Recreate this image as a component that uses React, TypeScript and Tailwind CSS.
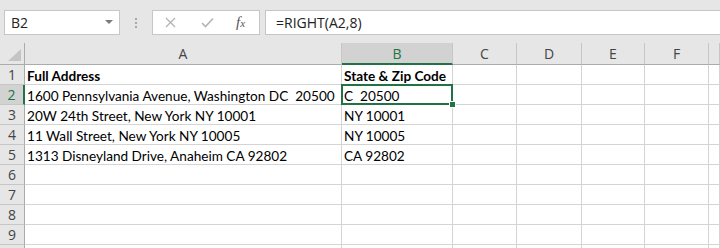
import React from "react";

const cols = [25, 317, 111, 64, 65, 63, 64, 11];
const letters = ["A", "B", "C", "D", "E", "F", ""];
const data: [string, string][] = [
  ["Full Address", "State & Zip Code"],
  ["1600 Pennsylvania Avenue, Washington DC  20500", "C  20500"],
  ["20W 24th Street, New York NY 10001", "NY 10001"],
  ["11 Wall Street, New York NY 10005", "NY 10005"],
  ["1313 Disneyland Drive, Anaheim CA 92802", "CA 92802"],
  ["", ""],
  ["", ""],
  ["", ""],
  ["", ""],
  ["", ""],
];

const ui = { fontFamily: '"Open Sans", "Noto Sans", sans-serif' };
const cell = { fontFamily: 'Lato, "Liberation Sans", sans-serif' };

export default function App() {
  return (
    <div className="w-[720px] h-[248px] overflow-hidden bg-white">
      {/* formula bar */}
      <div className="h-[43px] bg-[#e6e6e6] flex items-start pt-[10px] pl-[4px]" style={ui}>
        <div className="w-[116px] h-[25px] border border-[#c6c6c6] bg-white flex items-center pl-[6px] pr-[6px] justify-between">
          <span className="text-[14px] text-[#222]">B2</span>
          <svg width="8" height="5" viewBox="0 0 8 5"><path d="M0 0 L8 0 L4 4 Z" fill="#7a7a7a" /></svg>
        </div>
        <div className="w-[32px] h-[25px] flex flex-col items-center justify-center gap-[2px]">
          <span className="w-[2px] h-[2px] bg-[#a8a8a8]" />
          <span className="w-[2px] h-[2px] bg-[#a8a8a8]" />
          <span className="w-[2px] h-[2px] bg-[#a8a8a8]" />
        </div>
        <div className="w-[108px] h-[25px] border border-[#c6c6c6] bg-white flex items-center">
          <svg className="ml-[12px]" width="11" height="11" viewBox="0 0 11 11">
            <path d="M1 1 L10 10 M10 1 L1 10" stroke="#b4b4b4" strokeWidth="1.3" />
          </svg>
          <svg className="ml-[25px]" width="13" height="11" viewBox="0 0 13 11">
            <path d="M1 6 L4.5 9.5 L12 1.5" stroke="#b4b4b4" strokeWidth="1.6" fill="none" />
          </svg>
          <span className="ml-[22px] italic text-[#555] text-[15px] leading-none" style={{ fontFamily: '"Liberation Serif", serif' }}>
            f<span className="text-[11px]">x</span>
          </span>
        </div>
        <div className="ml-[5px] flex-1 h-[25px] border-y border-l border-[#c6c6c6] bg-white flex items-center pl-[10px]">
          <span className="text-[14px] text-[#222]">=RIGHT(A2,8)</span>
        </div>
      </div>
      {/* grid */}
      <div className="grid grid-cols-[25px_317px_111px_64px_65px_63px_64px_11px] grid-rows-[22px_repeat(10,20px)]">
        {/* header row */}
        <div className="bg-[#e6e6e6] border-r border-b border-[#ababab] relative">
          <svg className="absolute right-[3px] bottom-[3px]" width="13" height="12" viewBox="0 0 13 12">
            <path d="M13 0 L13 12 L0 12 Z" fill="#c4c4c4" />
          </svg>
        </div>
        {letters.map((l, i) => (
          <div
            key={i}
            className={
              i === 1
                ? "bg-[#d2d2d2] border-r border-[#c6c6c6] border-b-2 border-b-[#217346] flex items-center justify-center text-[14px] text-[#217346]"
                : "bg-[#e6e6e6] border-r border-[#c6c6c6] border-b border-b-[#ababab] flex items-center justify-center text-[14px] text-[#444]"
            }
            style={ui}
          >
            {l}
          </div>
        ))}
        {data.map((r, ri) => (
          <React.Fragment key={ri}>
            <div
              className={
                ri === 1
                  ? "bg-[#d2d2d2] border-r-2 border-r-[#217346] border-b border-b-[#c6c6c6] flex items-center justify-center text-[14px] text-[#217346]"
                  : "bg-[#e6e6e6] border-r border-r-[#ababab] border-b border-b-[#c6c6c6] flex items-center justify-center text-[14px] text-[#444]"
              }
              style={ui}
            >
              {ri < 9 ? ri + 1 : ""}
            </div>
            {cols.slice(1).map((_, ci) => (
              <div
                key={ci}
                className={
                  "border-r border-b border-[#d4d4d4] flex items-end pl-[2px] text-[13.6px] leading-[16px] text-black whitespace-pre relative " +
                  (ri === 0 ? "font-bold" : "")
                }
                style={cell}
              >
                {ci === 0 ? r[0] : ci === 1 ? r[1] : ""}
                {ri === 1 && ci === 1 && (
                  <>
                    <div className="absolute z-10 left-[-1px] top-[-1px] right-[-1px] bottom-[-1px] border-2 border-[#217346]" />
                    <div className="absolute z-20 right-[-4px] bottom-[-4px] w-[7px] h-[7px] bg-[#217346] border border-white" />
                  </>
                )}
              </div>
            ))}
          </React.Fragment>
        ))}
      </div>
    </div>
  );
}
